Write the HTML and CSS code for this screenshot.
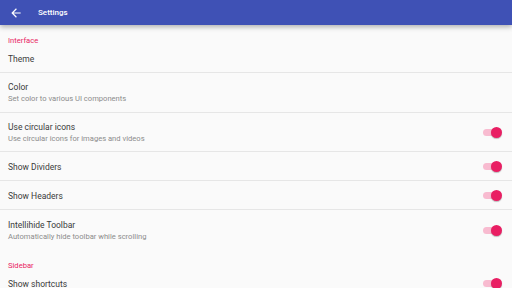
FILE: index.html
```html
<!DOCTYPE html>
<html lang="en">

<head>
    <meta charset="UTF-8">
    <meta name="viewport" content="width=device-width, initial-scale=1.0">
    <title>Settings</title>
    <link rel="stylesheet" href="styles.css">
</head>

<body>
    <div class="toolbar">
        <svg class="back" viewBox="0 0 24 24">
            <path d="M20 11H7.83l5.59-5.59L12 4l-8 8 8 8 1.41-1.41L7.83 13H20v-2z" fill="#fff" />
        </svg>
        <span class="title">Settings</span>
    </div>
    <div class="list">
        <div class="category">Interface</div>
        <div class="item divider">
            <div class="text"><div class="primary">Theme</div></div>
        </div>
        <div class="item two divider">
            <div class="text">
                <div class="primary">Color</div>
                <div class="secondary">Set color to various UI components</div>
            </div>
        </div>
        <div class="item two divider">
            <div class="text">
                <div class="primary">Use circular icons</div>
                <div class="secondary">Use circular icons for images and videos</div>
            </div>
            <div class="switch"></div>
        </div>
        <div class="item divider">
            <div class="text"><div class="primary">Show Dividers</div></div>
            <div class="switch"></div>
        </div>
        <div class="item divider">
            <div class="text"><div class="primary">Show Headers</div></div>
            <div class="switch"></div>
        </div>
        <div class="item two">
            <div class="text">
                <div class="primary">Intellihide Toolbar</div>
                <div class="secondary">Automatically hide toolbar while scrolling</div>
            </div>
            <div class="switch"></div>
        </div>
        <div class="category">Sidebar</div>
        <div class="item">
            <div class="text"><div class="primary">Show shortcuts</div></div>
            <div class="switch"></div>
        </div>
    </div>
</body>

</html>
```

FILE: styles.css
```css
body {
    margin: 0;
    font-family: Roboto, "Noto Sans", sans-serif;
    background: #fafafa;
    height: 288px;
    overflow: hidden;
}

.toolbar {
    height: 25px;
    background: #3f51b5;
    display: flex;
    align-items: center;
    box-shadow: 0 2px 5px rgba(0, 0, 0, 0.3);
    position: relative;
}

.back {
    width: 14px;
    height: 14px;
    margin-left: 9px;
}

.title {
    color: #fff;
    font-size: 8px;
    font-weight: 500;
    margin-left: 15px;
}

.category {
    height: 19px;
    padding-left: 8px;
    color: #e91e63;
    font-size: 7.6px;
    box-sizing: border-box;
    padding-top: 11px;
}

.item {
    display: flex;
    align-items: center;
    height: 29px;
    padding: 1px 10px 0 8px;
    box-sizing: border-box;
}

.item.two {
    height: 39.5px;
}

.divider {
    border-bottom: 1px solid #e6e6e6;
}

.text {
    flex: 1;
}

.primary {
    font-size: 8.5px;
    color: #3a3a3a;
}

.secondary {
    font-size: 7.6px;
    color: #8c8c8c;
    margin-top: 2px;
}

.switch {
    width: 19px;
    height: 7px;
    position: relative;
}

.switch::before {
    content: "";
    position: absolute;
    left: 0;
    top: 0;
    width: 15px;
    height: 7px;
    border-radius: 4px;
    background: #f8bbd0;
}

.switch::after {
    content: "";
    position: absolute;
    right: 0;
    top: -2px;
    width: 11px;
    height: 11px;
    border-radius: 50%;
    background: #e91e63;
    box-shadow: 0 1px 1px rgba(0, 0, 0, 0.25);
}
```
